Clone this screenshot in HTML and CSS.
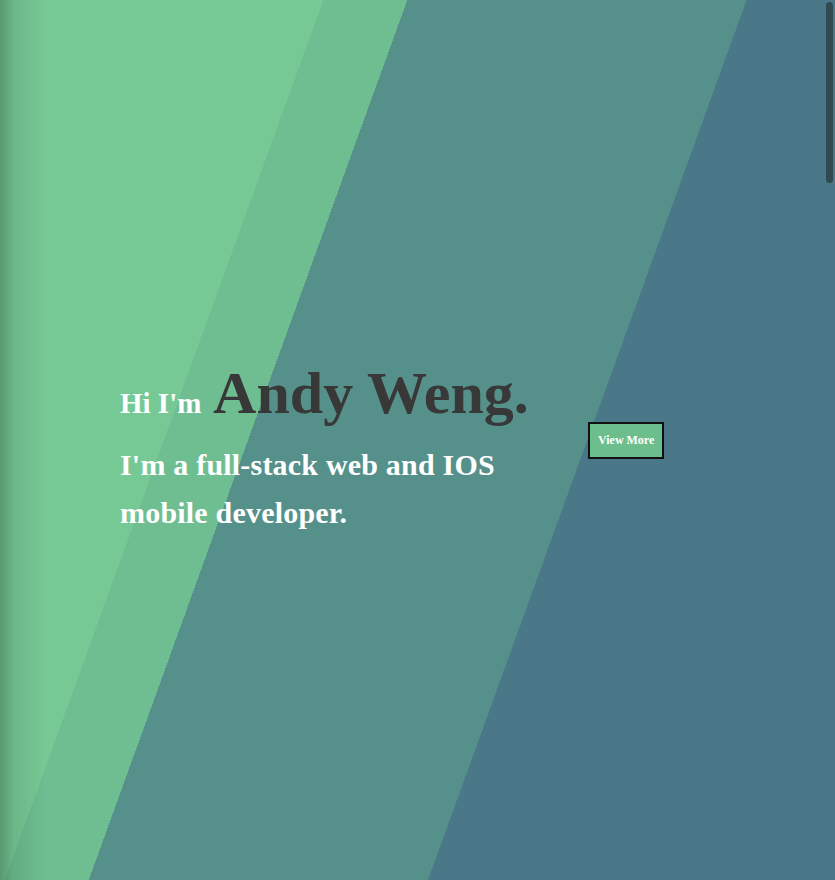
FILE: index.html
```html
<!DOCTYPE html>
<html lang="en">
<head>
    <meta charset="UTF-8">
    <meta name="viewport" content="width=device-width, initial-scale=1.0">
    <title>Andy Weng | Full-stack Developer</title>
    <link rel="stylesheet" href="styles.css">
</head>
<body>
    <section class="hero" id="home">
        <div class="hero-inner">
            <div class="hero-text">
                <h1><span class="hi">Hi I'm</span> <span class="name">Andy Weng.</span></h1>
                <p class="tagline">I'm a full-stack web and IOS mobile developer.</p>
            </div>
            <a class="btn" href="#about">View More</a>
        </div>
    </section>
    <div class="scroll-thumb"></div>
</body>
</html>
```

FILE: styles.css
```css
html {
    background-color: #4a7889;
}
body {
    margin: 0;
    font-family: "Liberation Serif", serif;
    color: #fff;
}
.hero {
    height: 100vh;
    display: flex;
    align-items: center;
    background:
        linear-gradient(to right, rgba(0, 0, 0, 0.24) 0, rgba(0, 0, 0, 0.09) 14px, rgba(0, 0, 0, 0) 46px),
        linear-gradient(109.9deg, #76c995 0, #76c995 304px, #6ebe91 304px, #6ebe91 383px, #55918a 383px, #55918a 702px, #4a7889 702px);
}
.hero-inner {
    display: flex;
    align-items: center;
    gap: 28px;
    padding-left: 120px;
}
.hero-text {
    width: 440px;
    padding-top: 16px;
}
.hero-text h1 {
    margin: 0;
    font-size: 60px;
    line-height: 1.1;
    font-weight: bold;
}
.hi {
    font-size: 29px;
    color: #fff;
}
.name {
    color: #383838;
}
.tagline {
    margin: 15px 0 0;
    font-size: 30px;
    line-height: 48px;
    font-weight: bold;
    letter-spacing: 0.2px;
}
.btn {
    display: inline-block;
    padding: 9px 8px;
    line-height: 15px;
    font-size: 12px;
    font-weight: bold;
    color: #fff;
    text-decoration: none;
    background-color: #6cbf8c;
    border: 2px solid #111;
}
.scroll-thumb {
    position: fixed;
    top: 2px;
    right: 2px;
    width: 7px;
    height: 181px;
    border-radius: 4px;
    background-color: #2e4a50;
}
```
